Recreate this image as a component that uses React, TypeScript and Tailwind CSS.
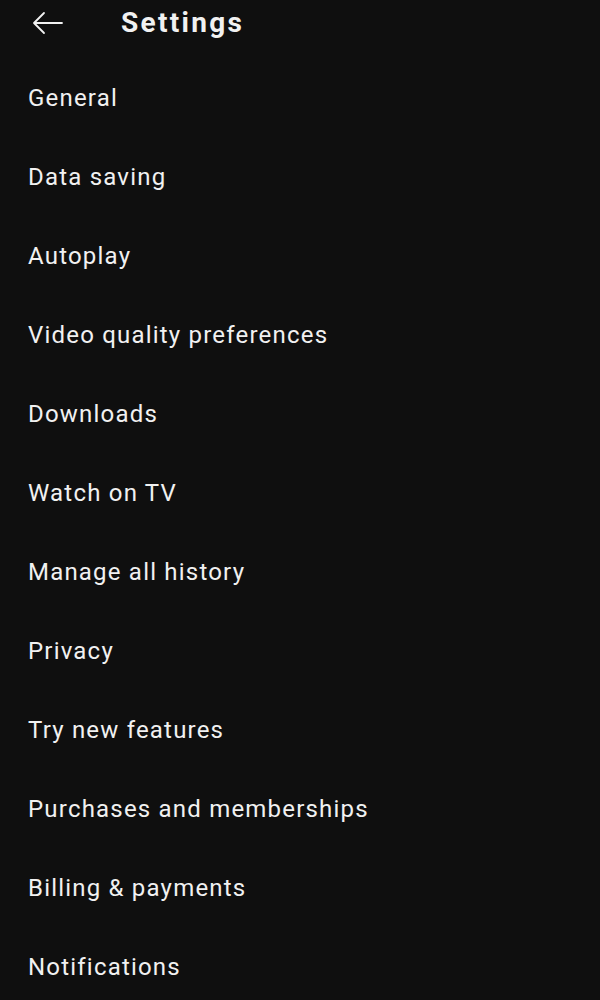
import React from 'react';

const items = [
  'General',
  'Data saving',
  'Autoplay',
  'Video quality preferences',
  'Downloads',
  'Watch on TV',
  'Manage all history',
  'Privacy',
  'Try new features',
  'Purchases and memberships',
  'Billing & payments',
  'Notifications',
];

const App: React.FC = () => {
  return (
    <div className="min-h-[1000px] w-full bg-[#0f0f0f] text-[#f1f1f1] font-['Roboto',sans-serif] overflow-hidden">
      <header className="flex items-center h-[46px]">
        <button className="ml-[31px] w-[34px] h-[34px] flex items-center justify-center text-[#f1f1f1]">
          <svg width="32" height="24" viewBox="0 0 32 24" fill="none" stroke="currentColor" strokeWidth="1.8" strokeLinecap="round" strokeLinejoin="round">
            <path d="M30 12H3" />
            <path d="M12 2L2 12l10 10" />
          </svg>
        </button>
        <h1 className="ml-[56px] text-[28px] font-bold leading-none tracking-[2.3px]">Settings</h1>
      </header>

      <ul className="pt-[12px]">
        {items.map((label) => (
          <li key={label} className="h-[79px] flex items-center px-[28px] text-[24px] leading-none tracking-[1.2px]">
            {label}
          </li>
        ))}
      </ul>
    </div>
  );
};

export default App;
